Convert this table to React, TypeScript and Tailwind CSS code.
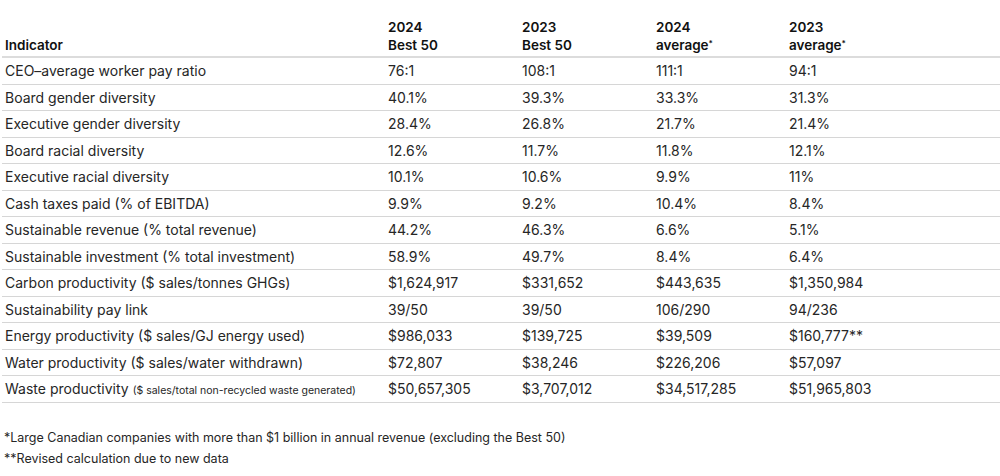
import React from 'react';

const rows: { label: React.ReactNode; values: string[] }[] = [
  { label: 'CEO–average worker pay ratio', values: ['76:1', '108:1', '111:1', '94:1'] },
  { label: 'Board gender diversity', values: ['40.1%', '39.3%', '33.3%', '31.3%'] },
  { label: 'Executive gender diversity', values: ['28.4%', '26.8%', '21.7%', '21.4%'] },
  { label: 'Board racial diversity', values: ['12.6%', '11.7%', '11.8%', '12.1%'] },
  { label: 'Executive racial diversity', values: ['10.1%', '10.6%', '9.9%', '11%'] },
  { label: 'Cash taxes paid (% of EBITDA)', values: ['9.9%', '9.2%', '10.4%', '8.4%'] },
  { label: 'Sustainable revenue (% total revenue)', values: ['44.2%', '46.3%', '6.6%', '5.1%'] },
  { label: 'Sustainable investment (% total investment)', values: ['58.9%', '49.7%', '8.4%', '6.4%'] },
  { label: 'Carbon productivity ($ sales/tonnes GHGs)', values: ['$1,624,917', '$331,652', '$443,635', '$1,350,984'] },
  { label: 'Sustainability pay link', values: ['39/50', '39/50', '106/290', '94/236'] },
  { label: 'Energy productivity ($ sales/GJ energy used)', values: ['$986,033', '$139,725', '$39,509', '$160,777**'] },
  { label: 'Water productivity ($ sales/water withdrawn)', values: ['$72,807', '$38,246', '$226,206', '$57,097'] },
  {
    label: (
      <>
        Waste productivity <span className="text-[10.5px]">($ sales/total non-recycled waste generated)</span>
      </>
    ),
    values: ['$50,657,305', '$3,707,012', '$34,517,285', '$51,965,803'],
  },
];

const cols = 'grid grid-cols-[383px_134px_134px_133px_1fr]';

export default function App() {
  return (
    <div className="bg-white w-[1000px] h-[476px] text-[#262626] font-['Inter','Liberation_Sans',sans-serif] text-[14px]">
      <div className="pl-[2px]">
        {/* header */}
        <div className={`${cols} h-[58px] items-end pb-[2px] border-b-2 border-[#dcdcdc] font-semibold text-[13.5px] leading-[18px] text-[#111]`}>
          <div className="pl-[3px]">Indicator</div>
          <div className="pl-[3px]">2024<br />Best 50</div>
          <div className="pl-[3px]">2023<br />Best 50</div>
          <div className="pl-[3px]">2024<br />average<sup className="text-[8px]">*</sup></div>
          <div className="pl-[3px]">2023<br />average<sup className="text-[8px]">*</sup></div>
        </div>
        {rows.map((r, i) => (
          <div key={i} className={`${cols} h-[26.5px] items-center border-b border-[#d6d6d6]`}>
            <div className="pl-[3px] whitespace-nowrap">{r.label}</div>
            {r.values.map((v, j) => (
              <div key={j} className="pl-[3px]">{v}</div>
            ))}
          </div>
        ))}
      </div>
      <div className="pl-[4px] pt-[24px] text-[12.5px] leading-[21px]">
        <div>*Large Canadian companies with more than $1 billion in annual revenue (excluding the Best 50)</div>
        <div>**Revised calculation due to new data</div>
      </div>
    </div>
  );
}
